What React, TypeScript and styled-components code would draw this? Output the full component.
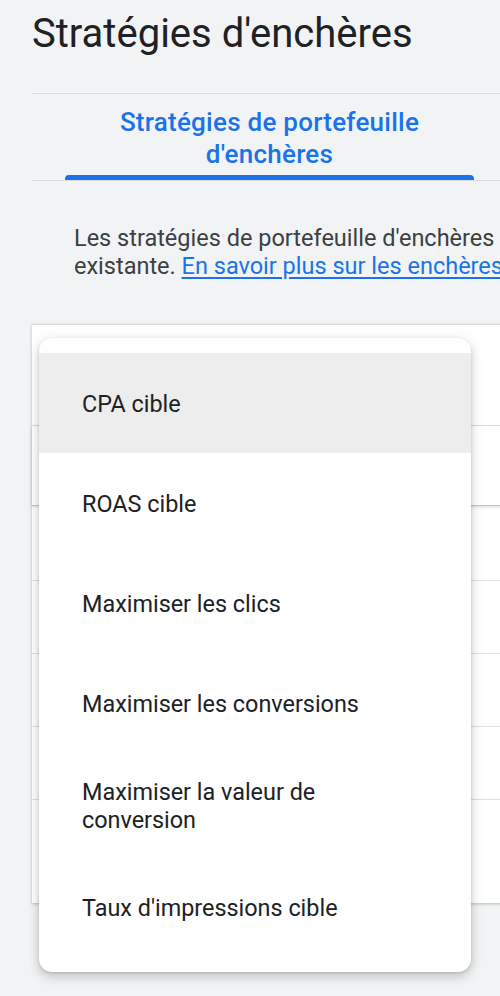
import { createGlobalStyle, styled } from "styled-components";

const GlobalStyle = createGlobalStyle`
  html, body {
    margin: 0;
    padding: 0;
    background: #f1f3f4;
    overflow: hidden;
  }
  body {
    font-family: Roboto, "Liberation Sans", Arial, sans-serif;
    color: #202124;
  }
`;

const Page = styled.div`
  width: 760px;
  min-height: 996px;
  padding-left: 32px;
`;

const Title = styled.h1`
  margin: 0 0 35px;
  padding-top: 10px;
  font-size: 40px;
  line-height: 48px;
  font-weight: 400;
  color: #202124;
  white-space: nowrap;
`;

const TabBar = styled.div`
  display: flex;
  padding-left: 33px;
  border-top: 1px solid #dadce0;
  border-bottom: 1px solid #dadce0;
`;

const Tab = styled.div`
  width: 409px;
  display: flex;
  flex-direction: column;
  align-items: center;
  padding-top: 12px;
`;

const TabLabel = styled.span<{ $active?: boolean }>`
  padding: 0 20px;
  margin-bottom: 5px;
  font-size: 26px;
  line-height: 32px;
  font-weight: 500;
  letter-spacing: 0.25px;
  text-align: center;
  color: ${(p) => (p.$active ? "#1a73e8" : "#5f6368")};
`;

const TabIndicator = styled.div`
  align-self: stretch;
  height: 5px;
  border-radius: 4px 4px 0 0;
  background: #1a73e8;
`;

const Description = styled.p`
  margin: 43px 0 0;
  padding-left: 42px;
  font-size: 23.5px;
  line-height: 28px;
  color: #3c4043;
`;

const DescLine = styled.span`
  display: block;
  white-space: nowrap;
`;

const LearnMore = styled.a`
  color: #1a73e8;
  text-decoration: underline;
  text-underline-offset: 3px;
`;

const TableCard = styled.div`
  position: relative;
  margin-top: 44px;
  background: #fff;
  border-top: 1px solid #dadce0;
  box-shadow: 0 1px 3px rgba(60, 64, 67, 0.3);
`;

const Row = styled.div<{ $height: number; $strong?: boolean; $last?: boolean }>`
  box-sizing: border-box;
  height: ${(p) => p.$height}px;
  border-bottom: ${(p) =>
    p.$last ? "none" : p.$strong ? "1px solid #c4c7c5" : "1px solid #e0e0e0"};
  box-shadow: ${(p) => (p.$strong ? "0 1px 3px rgba(60, 64, 67, 0.18)" : "none")};
`;

const Menu = styled.ul`
  position: absolute;
  top: 13px;
  left: 7px;
  width: 432px;
  margin: 0;
  padding: 15px 0;
  list-style: none;
  background: #fff;
  border-radius: 13px;
  box-shadow: 0 4px 12px rgba(0, 0, 0, 0.22), 0 1px 3px rgba(0, 0, 0, 0.12);
  z-index: 10;
`;

const MenuItem = styled.li<{ $active?: boolean }>`
  box-sizing: border-box;
  min-height: 100px;
  display: flex;
  align-items: center;
  padding: 25px 80px 23px 43px;
  font-size: 23.4px;
  line-height: 28px;
  color: #202124;
  background: ${(p) => (p.$active ? "#ededed" : "transparent")};
`;

const ROW_HEIGHTS = [101, 80, 75, 73, 73, 73, 103];

const OPTIONS = [
  "CPA cible",
  "ROAS cible",
  "Maximiser les clics",
  "Maximiser les conversions",
  "Maximiser la valeur de conversion",
  "Taux d'impressions cible",
];

export default function App() {
  return (
    <>
      <GlobalStyle />
      <Page>
        <Title>Stratégies d'enchères</Title>

        <TabBar>
          <Tab>
            <TabLabel $active>Stratégies de portefeuille d'enchères</TabLabel>
            <TabIndicator />
          </Tab>
        </TabBar>

        <Description>
          <DescLine>
            Les stratégies de portefeuille d'enchères regroupent plusieurs campagnes autour d'un objectif
          </DescLine>
          <DescLine>
            existante. <LearnMore href="#">En savoir plus sur les enchères</LearnMore>
          </DescLine>
        </Description>

        <TableCard>
          {ROW_HEIGHTS.map((h, i) => (
            <Row
              key={i}
              $height={h}
              $strong={i === 1}
              $last={i === ROW_HEIGHTS.length - 1}
            />
          ))}

          <Menu>
            {OPTIONS.map((label, i) => (
              <MenuItem key={label} $active={i === 0}>
                {label}
              </MenuItem>
            ))}
          </Menu>
        </TableCard>
      </Page>
    </>
  );
}
